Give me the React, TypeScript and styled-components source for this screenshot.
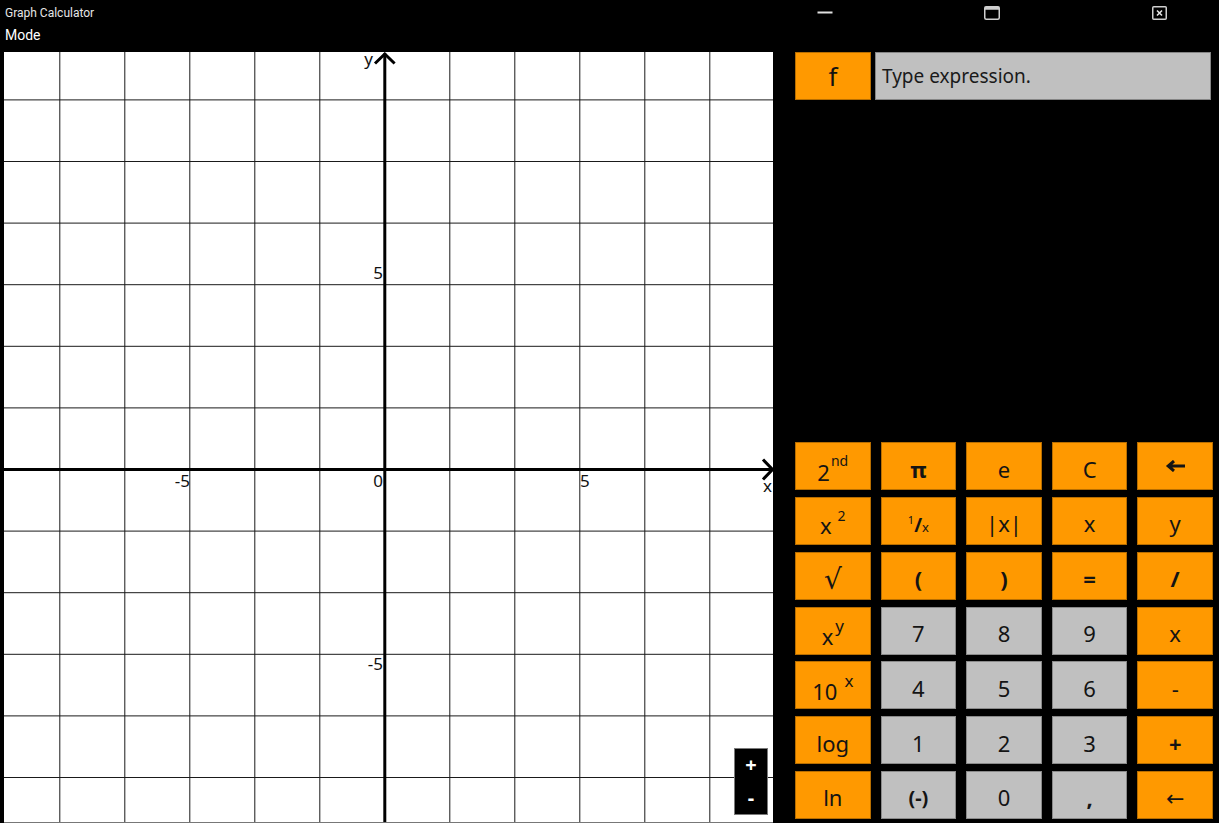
import React from "react";
import styled, { createGlobalStyle } from "styled-components";

const Global = createGlobalStyle`
  html, body { margin: 0; padding: 0; background: #000; }
  body { font-family: "Noto Sans", "DejaVu Sans", sans-serif; overflow: hidden; }
  * { box-sizing: border-box; }
`;

const Window = styled.div`
  width: 1219px;
  height: 823px;
  background: #000;
  display: flex;
  flex-direction: column;
  overflow: hidden;
`;

const TitleBar = styled.div`
  height: 26px;
  display: flex;
  align-items: center;
  padding-left: 5px;
  font-family: Roboto, "Noto Sans", sans-serif;
`;

const Title = styled.span`
  flex: 1;
  font-size: 12px;
  color: #e6e6e6;
`;

const Controls = styled.div`
  display: flex;
  gap: 133px;
  margin-right: 43px;
`;

const ControlButton = styled.div`
  width: 34px;
  height: 26px;
  display: flex;
  align-items: center;
  justify-content: center;
`;

const MenuBar = styled.div`
  height: 18px;
  margin-bottom: 8px;
  padding-left: 5px;
  display: flex;
  align-items: center;
  font-family: Roboto, "Noto Sans", sans-serif;
  font-size: 14px;
  color: #fff;
`;

const Main = styled.div`
  flex: 1;
  display: flex;
  gap: 22px;
  padding-left: 4px;
`;

const GraphPanel = styled.div`
  position: relative;
  width: 769px;
  height: 771px;
  background: #fff;
  border-bottom: 1px solid #777;
  overflow: hidden;
`;

const ZoomBox = styled.div`
  position: absolute;
  right: 5px;
  bottom: 7px;
  width: 34px;
  height: 67px;
  background: #000;
  border: 1px solid #7a7a7a;
  display: flex;
  flex-direction: column;
`;

const ZoomButton = styled.div`
  flex: 1;
  display: flex;
  align-items: center;
  justify-content: center;
  color: #fff;
  font-weight: 700;
  font-size: 20px;
  line-height: 1;
`;

const SidePanel = styled.div`
  width: 418px;
  display: flex;
  flex-direction: column;
  justify-content: space-between;
  padding-bottom: 4px;
`;

const ExprRow = styled.div`
  height: 48px;
  display: flex;
  gap: 4px;
  margin-right: 2px;
`;

const FButton = styled.div`
  width: 76px;
  background: #ff9900;
  border: 1px solid #b86e00;
  display: flex;
  align-items: center;
  justify-content: center;
  font-size: 26px;
  color: #111;
`;

const ExprField = styled.div`
  flex: 1;
  background: #c0c0c0;
  border: 1px solid #858585;
  display: flex;
  align-items: center;
  padding-left: 6px;
  font-size: 19px;
  color: #1a1a1a;
`;

const Keypad = styled.div`
  display: grid;
  grid-template-columns: repeat(5, 1fr);
  grid-auto-rows: 48px;
  column-gap: 10px;
  row-gap: 6.8px;
`;

const Key = styled.div<{ $tone: "orange" | "gray"; $bold?: boolean; $size?: number }>`
  background: ${(p) => (p.$tone === "orange" ? "#ff9900" : "#c0c0c0")};
  border: 1px solid ${(p) => (p.$tone === "orange" ? "#b86e00" : "#8a8a8a")};
  display: flex;
  align-items: center;
  justify-content: center;
  padding-top: 5px;
  font-size: ${(p) => p.$size ?? 22}px;
  font-weight: ${(p) => (p.$bold ? 700 : 400)};
  color: #141414;
  line-height: 1.2;
  white-space: nowrap;
`;

const Label = styled.span`
  display: inline-block;
`;

const Sup = styled.span<{ $raise: number; $size: number; $gap?: number }>`
  font-size: ${(p) => p.$size}px;
  vertical-align: ${(p) => p.$raise}px;
  margin-left: ${(p) => p.$gap ?? 0}px;
`;

const SlashMark = styled.span`
  font-size: 19px;
  font-weight: 700;
`;

const IconWrap = styled.span`
  display: flex;
  margin-top: -5px;
`;

const BackArrow = () => (
  <IconWrap>
    <svg width="21" height="12" viewBox="0 0 21 12">
      <path d="M20 6H3.5M9 1L3.2 6L9 11" fill="none" stroke="#141414" strokeWidth="3" strokeLinecap="butt" strokeLinejoin="miter" />
    </svg>
  </IconWrap>
);

type KeyDef = { label: React.ReactNode; tone: "orange" | "gray"; bold?: boolean; size?: number };

const O = "orange" as const;
const G = "gray" as const;

const keys: KeyDef[] = [
  { label: <Label>2<Sup $raise={15} $size={14} $gap={1}>nd</Sup></Label>, tone: O },
  { label: "π", tone: O, bold: true },
  { label: "e", tone: O },
  { label: "C", tone: O },
  { label: <BackArrow />, tone: O },

  { label: <Label>x<Sup $raise={13} $size={14} $gap={6}>2</Sup></Label>, tone: O },
  { label: <Label><Sup $raise={8} $size={11}>1</Sup><SlashMark>/</SlashMark><Sup $raise={0} $size={13}>x</Sup></Label>, tone: O },
  { label: "|x|", tone: O },
  { label: "x", tone: O },
  { label: "y", tone: O },

  { label: "√", tone: O, size: 28 },
  { label: "(", tone: O, bold: true },
  { label: ")", tone: O, bold: true },
  { label: "=", tone: O, bold: true },
  { label: "/", tone: O, bold: true },

  { label: <Label>x<Sup $raise={13} $size={17} $gap={2}>y</Sup></Label>, tone: O },
  { label: "7", tone: G },
  { label: "8", tone: G },
  { label: "9", tone: G },
  { label: "x", tone: O },

  { label: <Label>10<Sup $raise={13} $size={17} $gap={7}>x</Sup></Label>, tone: O },
  { label: "4", tone: G },
  { label: "5", tone: G },
  { label: "6", tone: G },
  { label: "-", tone: O },

  { label: "log", tone: O },
  { label: "1", tone: G },
  { label: "2", tone: G },
  { label: "3", tone: G },
  { label: "+", tone: O, bold: true },

  { label: "ln", tone: O },
  { label: "(-)", tone: G, bold: true, size: 20 },
  { label: "0", tone: G },
  { label: ",", tone: G, bold: true },
  { label: "←", tone: O },
];

const W = 769;
const H = 770;
const OX = 380.8;
const OY = 417.5;

const Graph = () => {
  const vLines: number[] = [];
  for (let k = -6; k <= 6; k++) {
    const x = OX + 65 * k;
    if (k !== 0 && x > 0 && x < W) vLines.push(x);
  }
  const hLines: number[] = [];
  for (let k = -7; k <= 6; k++) {
    const y = OY + 61.6 * k;
    if (k !== 0 && y > 0 && y < H) hLines.push(y);
  }
  const label = { fontFamily: "'Noto Sans', 'DejaVu Sans', sans-serif", fontSize: 17, fill: "#111" };
  return (
    <svg width={W} height={H} viewBox={`0 0 ${W} ${H}`} style={{ display: "block" }}>
      {vLines.map((x) => (
        <line key={"v" + x} x1={x} y1={0} x2={x} y2={H} stroke="#1a1a1a" strokeWidth={1} />
      ))}
      {hLines.map((y) => (
        <line key={"h" + y} x1={0} y1={y} x2={W} y2={y} stroke="#1a1a1a" strokeWidth={1} />
      ))}
      <line x1={0} y1={OY} x2={770} y2={OY} stroke="#000" strokeWidth={3} />
      <line x1={OX} y1={1.5} x2={OX} y2={H} stroke="#000" strokeWidth={3} />
      <polyline points="371,11.5 380.8,2 390.6,11.5" fill="none" stroke="#000" strokeWidth={3} />
      <polyline points="759,407.5 768.5,417.5 759,427.5" fill="none" stroke="#000" strokeWidth={3} />
      <text x={369} y={13} textAnchor="end" {...label}>y</text>
      <text x={759} y={440} {...label}>x</text>
      <text x={379} y={227} textAnchor="end" {...label}>5</text>
      <text x={379} y={618} textAnchor="end" {...label}>-5</text>
      <text x={379} y={435} textAnchor="end" {...label}>0</text>
      <text x={186} y={435} textAnchor="end" {...label}>-5</text>
      <text x={576} y={435} {...label}>5</text>
    </svg>
  );
};

export default function App() {
  return (
    <Window>
      <Global />
      <TitleBar>
        <Title>Graph Calculator</Title>
        <Controls>
          <ControlButton>
            <svg width="16" height="4" viewBox="0 0 16 4">
              <line x1="0.5" y1="1.5" x2="15.5" y2="1.5" stroke="#e0e0e0" strokeWidth="2" />
            </svg>
          </ControlButton>
          <ControlButton>
            <svg width="16" height="14" viewBox="0 0 16 14">
              <rect x="0.75" y="0.75" width="14.5" height="12.5" rx="1.5" fill="none" stroke="#cfcfcf" strokeWidth="1.5" />
              <rect x="0.75" y="0.75" width="14.5" height="3" fill="#cfcfcf" />
            </svg>
          </ControlButton>
          <ControlButton>
            <svg width="15" height="14" viewBox="0 0 15 14">
              <rect x="0.75" y="0.75" width="13.5" height="12.5" rx="1" fill="none" stroke="#cfcfcf" strokeWidth="1.5" />
              <path d="M5 4.5L10 9.5M10 4.5L5 9.5" stroke="#e6e6e6" strokeWidth="1.6" />
            </svg>
          </ControlButton>
        </Controls>
      </TitleBar>
      <MenuBar>Mode</MenuBar>
      <Main>
        <GraphPanel>
          <Graph />
          <ZoomBox>
            <ZoomButton>+</ZoomButton>
            <ZoomButton>-</ZoomButton>
          </ZoomBox>
        </GraphPanel>
        <SidePanel>
          <ExprRow>
            <FButton>f</FButton>
            <ExprField>Type expression.</ExprField>
          </ExprRow>
          <Keypad>
            {keys.map((k, i) => (
              <Key key={i} $tone={k.tone} $bold={k.bold} $size={k.size}>
                {k.label}
              </Key>
            ))}
          </Keypad>
        </SidePanel>
      </Main>
    </Window>
  );
}
